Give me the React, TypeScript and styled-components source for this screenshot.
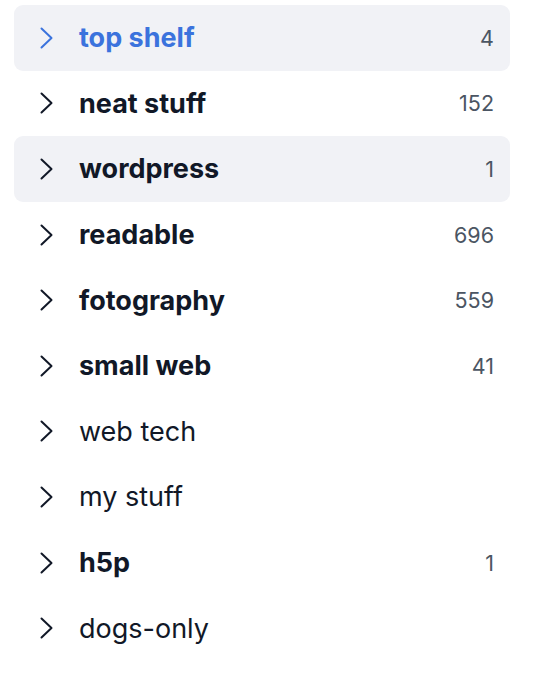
import { createGlobalStyle } from 'styled-components'
import styled from 'styled-components'

const GlobalStyle = createGlobalStyle`
	body {
		margin: 0;
		background: #fff;
		font-family: Inter, "Noto Sans", sans-serif;
	}
`

const List = styled.ul`
	list-style: none;
	margin: 0;
	padding: 5px 24px 0 14px;
	display: flex;
	flex-direction: column;
`

const Row = styled.li<{ $shaded?: boolean }>`
	display: flex;
	align-items: center;
	height: 65.6px;
	padding: 0 16px 0 26px;
	border-radius: 9px;
	background: ${p => (p.$shaded ? '#f1f2f6' : 'transparent')};
`

const Chevron = styled.svg<{ $active?: boolean }>`
	width: 13px;
	height: 22px;
	flex: none;
	color: ${p => (p.$active ? '#3b73dd' : '#111827')};
`

const Label = styled.span<{ $bold?: boolean; $active?: boolean }>`
	margin-left: 26px;
	flex: 1;
	font-size: 27px;
	font-weight: ${p => (p.$bold ? 700 : 400)};
	color: ${p => (p.$active ? '#3b73dd' : '#111827')};
`

const Count = styled.span`
	font-size: 21.5px;
	color: #4b5563;
`

type Item = {
	name: string
	count?: number
	bold?: boolean
	shaded?: boolean
	active?: boolean
}

const items: Item[] = [
	{ name: 'top shelf', count: 4, bold: true, shaded: true, active: true },
	{ name: 'neat stuff', count: 152, bold: true },
	{ name: 'wordpress', count: 1, bold: true, shaded: true },
	{ name: 'readable', count: 696, bold: true },
	{ name: 'fotography', count: 559, bold: true },
	{ name: 'small web', count: 41, bold: true },
	{ name: 'web tech' },
	{ name: 'my stuff' },
	{ name: 'h5p', count: 1, bold: true },
	{ name: 'dogs-only' },
]

const App = () => {
	return (
		<>
			<GlobalStyle />
			<List>
				{items.map(item => (
					<Row key={item.name} $shaded={item.shaded}>
						<Chevron $active={item.active} viewBox="0 0 13 22" fill="none">
							<path
								d="M1.5 1.5 L11.5 11 L1.5 20.5"
								stroke="currentColor"
								strokeWidth="2"
								strokeLinecap="round"
								strokeLinejoin="round"
							/>
						</Chevron>
						<Label $bold={item.bold} $active={item.active}>{item.name}</Label>
						{item.count !== undefined && <Count>{item.count}</Count>}
					</Row>
				))}
			</List>
		</>
	)
}

export default App
